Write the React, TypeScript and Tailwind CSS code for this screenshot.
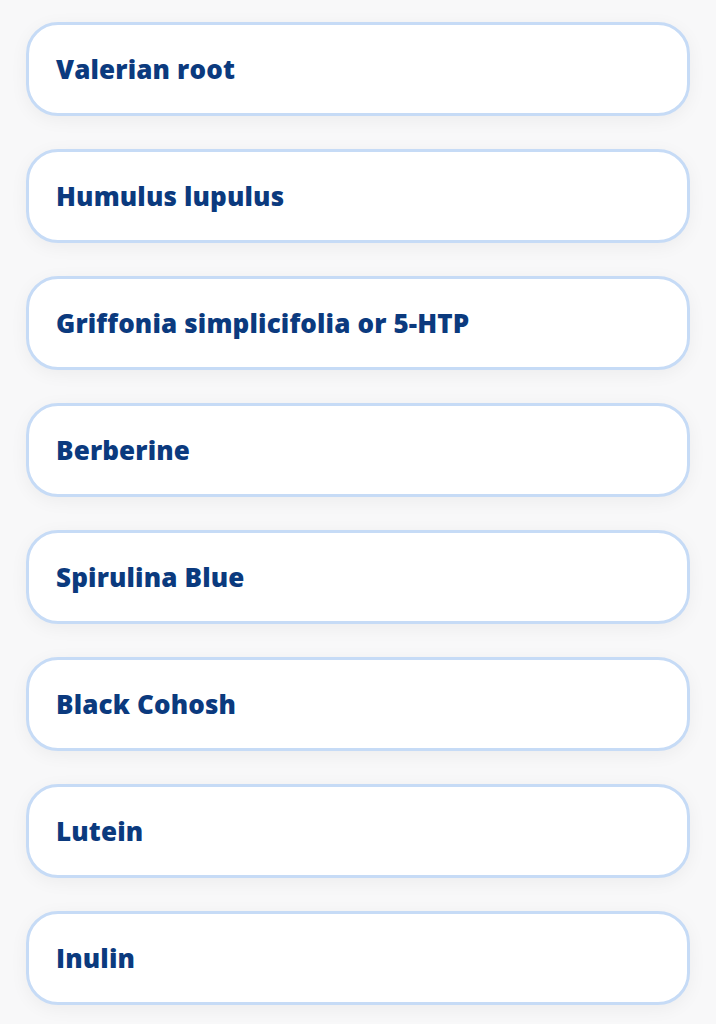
import React from "react";

const items = [
  "Valerian root",
  "Humulus lupulus",
  "Griffonia simplicifolia or 5-HTP",
  "Berberine",
  "Spirulina Blue",
  "Black Cohosh",
  "Lutein",
  "Inulin",
];

export default function App() {
  return (
    <div className="min-h-[1024px] w-full bg-[#f8f8f9] px-[26px] pt-[22px] pb-[20px]">
      <div className="flex flex-col gap-[33px]">
        {items.map((t) => (
          <div
            key={t}
            className="flex h-[94px] items-center rounded-[32px] border-[3px] border-[#c6dbf6] bg-white pl-[27px] shadow-[0_4px_18px_rgba(0,0,0,0.05)]"
          >
            <span
              className="text-[26px] font-extrabold leading-none tracking-[0.15px] text-[#0b3a7e]"
              style={{ fontFamily: '"Open Sans", "Liberation Sans", sans-serif' }}
            >
              {t}
            </span>
          </div>
        ))}
      </div>
    </div>
  );
}
